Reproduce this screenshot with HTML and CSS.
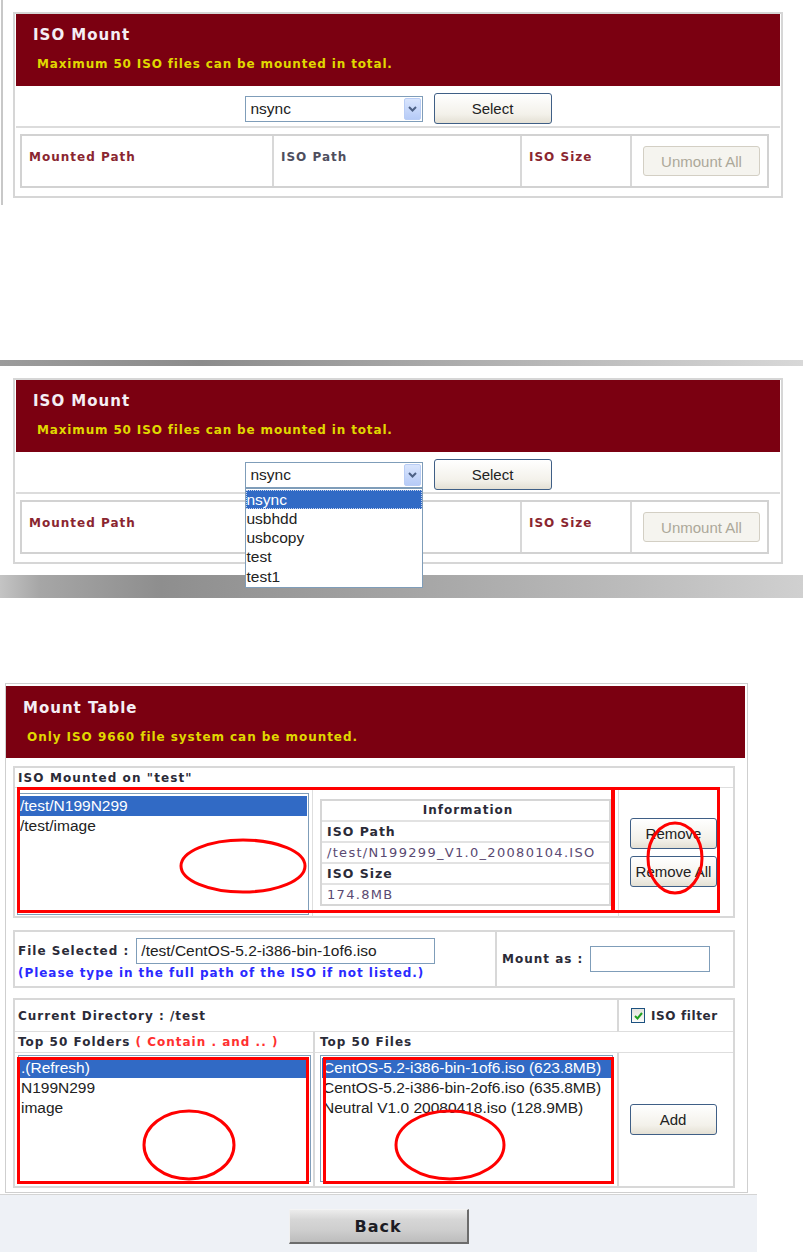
FILE: index.html
```html
<!DOCTYPE html>
<html lang="en">
<head>
    <meta charset="UTF-8">
    <meta name="viewport" content="width=device-width, initial-scale=1.0">
    <title>ISO Mount</title>
    <link rel="stylesheet" href="styles.css">
</head>
<body>
    <!-- ISO Mount, closed list -->
    <div class="shot shot-one">
        <div class="panel">
            <div class="panel-head">
                <h2>ISO Mount</h2>
                <p>Maximum 50 ISO files can be mounted in total.</p>
            </div>
            <div class="share-row">
                <div class="combo">
                    <span>nsync</span>
                    <span class="combo-arrow"><svg width="9" height="6" viewBox="0 0 9 6"><path d="M1 1 L4.5 4.5 L8 1" fill="none" stroke="#4d6185" stroke-width="2"/></svg></span>
                </div>
                <button class="btn btn-select">Select</button>
            </div>
            <div class="mount-grid">
                <div class="cell lbl-maroon">Mounted Path</div>
                <div class="cell lbl-grey">ISO Path</div>
                <div class="cell lbl-maroon">ISO Size</div>
                <div class="cell cell-btn"><button class="btn btn-off">Unmount All</button></div>
            </div>
        </div>
    </div>

    <!-- ISO Mount, list opened -->
    <div class="shot shot-two">
        <div class="frame-top"></div>
        <div class="frame-body">
            <div class="panel">
                <div class="panel-head">
                    <h2>ISO Mount</h2>
                    <p>Maximum 50 ISO files can be mounted in total.</p>
                </div>
                <div class="share-row">
                    <div class="combo">
                        <span>nsync</span>
                        <span class="combo-arrow"><svg width="9" height="6" viewBox="0 0 9 6"><path d="M1 1 L4.5 4.5 L8 1" fill="none" stroke="#4d6185" stroke-width="2"/></svg></span>
                        <ul class="drop-list">
                            <li class="picked">nsync</li>
                            <li>usbhdd</li>
                            <li>usbcopy</li>
                            <li>test</li>
                            <li>test1</li>
                        </ul>
                    </div>
                    <button class="btn btn-select">Select</button>
                </div>
                <div class="mount-grid">
                    <div class="cell lbl-maroon">Mounted Path</div>
                    <div class="cell lbl-grey"></div>
                    <div class="cell lbl-maroon">ISO Size</div>
                    <div class="cell cell-btn"><button class="btn btn-off">Unmount All</button></div>
                </div>
            </div>
        </div>
        <div class="frame-bottom"></div>
    </div>

    <!-- Mount Table -->
    <div class="shot shot-three">
        <div class="mt-box">
            <div class="panel-head mt-head">
                <h2>Mount Table</h2>
                <p>Only ISO 9660 file system can be mounted.</p>
            </div>

            <div class="section sec-mounted">
                <div class="sec-title">ISO Mounted on "test"</div>
                <div class="mounted-body">
                    <div class="list-cell">
                        <div class="listbox">
                            <div class="opt picked">/test/N199N299</div>
                            <div class="opt">/test/image</div>
                        </div>
                    </div>
                    <div class="info-cell">
                        <div class="info-table">
                            <div class="info-row info-head">Information</div>
                            <div class="info-row info-key">ISO Path</div>
                            <div class="info-row info-val">/test/N199299_V1.0_20080104.ISO</div>
                            <div class="info-row info-key">ISO Size</div>
                            <div class="info-row info-val">174.8MB</div>
                        </div>
                    </div>
                    <div class="btn-cell">
                        <button class="btn btn-side">Remove</button>
                        <button class="btn btn-side">Remove All</button>
                    </div>
                </div>
            </div>

            <div class="section sec-file">
                <div class="file-left">
                    <div class="file-line">
                        <span class="lbl-dark">File Selected :</span>
                        <span class="text-box file-box">/test/CentOS-5.2-i386-bin-1of6.iso</span>
                    </div>
                    <div class="note-blue">(Please type in the full path of the ISO if not listed.)</div>
                </div>
                <div class="file-right">
                    <span class="lbl-dark">Mount as :</span>
                    <span class="text-box mount-box"></span>
                </div>
            </div>

            <div class="section sec-browse">
                <div class="cur-dir lbl-dark">Current Directory : /test</div>
                <div class="filter-cell">
                    <span class="check"><svg width="9" height="8" viewBox="0 0 9 8"><path d="M1 4 L3.5 6.5 L8 1" fill="none" stroke="#21a121" stroke-width="2"/></svg></span>
                    <span class="lbl-dark">ISO filter</span>
                </div>
                <div class="col-title lbl-dark">Top 50 Folders <span class="note-red">( Contain . and .. )</span></div>
                <div class="col-title col-files lbl-dark">Top 50 Files</div>
                <div class="list-cell browse-left">
                    <div class="listbox tall">
                        <div class="opt picked">.(Refresh)</div>
                        <div class="opt">N199N299</div>
                        <div class="opt">image</div>
                    </div>
                </div>
                <div class="list-cell browse-mid">
                    <div class="listbox tall">
                        <div class="opt picked">CentOS-5.2-i386-bin-1of6.iso (623.8MB)</div>
                        <div class="opt">CentOS-5.2-i386-bin-2of6.iso (635.8MB)</div>
                        <div class="opt">Neutral V1.0 20080418.iso (128.9MB)</div>
                    </div>
                </div>
                <div class="btn-cell browse-right">
                    <button class="btn btn-side">Add</button>
                </div>
            </div>
        </div>

        <div class="back-bar">
            <button class="btn-back">Back</button>
        </div>

        <!-- red marks drawn over the screenshot -->
        <svg class="marks" width="803" height="569" viewBox="0 683 803 569">
            <g fill="none" stroke="#ff0000" stroke-width="3">
                <rect x="18.5" y="788.5" width="594" height="123"/>
                <rect x="613.5" y="788.5" width="105" height="123"/>
                <rect x="18.5" y="1058.5" width="289" height="124"/>
                <rect x="324.5" y="1058.5" width="288" height="124"/>
                <ellipse cx="243" cy="866" rx="62" ry="26"/>
                <ellipse cx="675" cy="858" rx="27" ry="35"/>
                <ellipse cx="189" cy="1145" rx="45" ry="34"/>
                <ellipse cx="450" cy="1145" rx="54" ry="34"/>
            </g>
        </svg>
    </div>
</body>
</html>
```

FILE: styles.css
```css
body {
    margin: 0;
    padding: 0;
    background-color: #fff;
    font-family: "DejaVu Sans", Verdana, sans-serif;
    width: 803px;
}

button {
    font-family: "Liberation Sans", Arial, sans-serif;
}

/* shared panel */
.panel {
    box-sizing: border-box;
    width: 770px;
    height: 186px;
    border: 2px solid #d6d6d6;
    padding: 0 1px;
    background-color: #fff;
}

.panel-head {
    box-sizing: border-box;
    height: 72px;
    background-color: #7b0011;
    padding: 12px 0 0 17px;
}

.panel-head h2 {
    margin: 0;
    font-size: 15px;
    line-height: 18px;
    letter-spacing: 1px;
    color: #f4eef4;
}

.panel-head p {
    margin: 12px 0 0 4px;
    font-size: 12px;
    font-weight: bold;
    line-height: 16px;
    letter-spacing: 0.85px;
    color: #e0d800;
}

.share-row {
    box-sizing: border-box;
    height: 42px;
    padding-top: 5px;
    display: flex;
    justify-content: center;
    align-items: center;
    gap: 11px;
    border-bottom: 2px solid #dcdcdc;
}

.combo {
    position: relative;
    box-sizing: border-box;
    width: 178px;
    height: 26px;
    border: 1px solid #7f9db9;
    display: flex;
    align-items: center;
    justify-content: space-between;
    padding: 0 1px 0 5px;
    font-family: "Liberation Sans", Arial, sans-serif;
    font-size: 15.5px;
    color: #222;
}

.combo-arrow {
    width: 17px;
    height: 22px;
    box-sizing: border-box;
    border: 1px solid #b9cdf5;
    border-radius: 2px;
    background: linear-gradient(#d9e5fd, #b6cbf7);
    display: flex;
    align-items: center;
    justify-content: center;
}

.drop-list {
    position: absolute;
    top: 25px;
    left: -1px;
    width: 178px;
    box-sizing: border-box;
    margin: 0;
    padding: 1px 0 1px;
    list-style: none;
    background-color: #fff;
    border: 1px solid #7f9db9;
    z-index: 5;
}

.drop-list li {
    height: 19.3px;
    line-height: 19.3px;
    padding-left: 1px;
    color: #222;
}

.drop-list li.picked {
    background-color: #316ac5;
    color: #fff;
    outline: 1px dotted #c8d4ee;
    outline-offset: -1px;
}

.btn {
    box-sizing: border-box;
    border: 1px solid #3f5f86;
    border-radius: 3px;
    background: linear-gradient(#ffffff, #f3f1ea 70%, #e4e0d4);
    color: #222;
    font-size: 15px;
    padding: 0;
    cursor: pointer;
}

.btn-select {
    width: 118px;
    height: 31px;
}

.btn-off {
    width: 117px;
    height: 30px;
    border-color: #d3cfc4;
    background: #f5f4ef;
    color: #aca899;
    cursor: default;
}

.mount-grid {
    box-sizing: border-box;
    height: 54px;
    margin: 6px 11px 0 4px;
    display: grid;
    grid-template-columns: 250px 248px 110px 1fr;
    border: 2px solid #d2d2d2;
}

.mount-grid .cell {
    padding: 14px 0 0 7px;
    font-size: 12px;
    font-weight: bold;
    letter-spacing: 1px;
    border-left: 2px solid #d8d8d8;
}

.mount-grid .cell:first-child {
    border-left: none;
}

.mount-grid .cell-btn {
    padding: 0 0 0 11px;
    display: flex;
    align-items: center;
}

.lbl-maroon {
    color: #8a2630;
}

.lbl-grey {
    color: #4e4e5e;
}

/* shot one */
.shot-one {
    height: 205px;
    box-sizing: border-box;
    margin-left: 1px;
    border-left: 2px solid #c8c8c8;
    padding: 12px 0 0 10px;
}

/* shot two */
.shot-two {
    margin-top: 155px;
}

.frame-top {
    height: 6px;
    background: linear-gradient(to right, #9c9c9c, #8c8c8c 25%, #b0b0b0 60%, #d8d8d8);
}

.frame-body {
    padding: 12px 0 11px 10px;
    margin-left: 3px;
    background-color: #fff;
}

.frame-bottom {
    height: 23px;
    background: linear-gradient(to right, #c4c4c4, #a6a6a6 5%, #8e8e8e 20%, #a4a4a4 50%, #bdbdbd 80%, #d0d0d0);
}

/* shot three */
.shot-three {
    position: relative;
    margin-top: 85px;
}

.mt-box {
    box-sizing: border-box;
    width: 743px;
    margin-left: 5px;
    border: 1px solid #cfcfcf;
    padding: 2px 2px 4px 0;
}

.mt-head {
    height: 72px;
    padding: 13px 0 0 17px;
}

.mt-head p {
    margin-left: 4px;
    letter-spacing: 0.95px;
}

.section {
    box-sizing: border-box;
    width: 722px;
    margin-left: 7px;
    border: 2px solid #d8d8d8;
    background-color: #fff;
}

.lbl-dark {
    font-size: 12px;
    font-weight: bold;
    letter-spacing: 1px;
    color: #2b2b38;
}

.sec-mounted {
    margin-top: 8px;
    height: 152px;
}

.sec-title {
    height: 19px;
    line-height: 20px;
    padding-left: 3px;
    font-size: 12px;
    font-weight: bold;
    letter-spacing: 1.1px;
    color: #2b2b38;
    border-bottom: 1px solid #dedede;
}

.mounted-body {
    display: grid;
    grid-template-columns: 297px 307px 1fr;
    height: 128px;
}

.list-cell {
    padding: 5px 3px 2px 2px;
}

.listbox {
    box-sizing: border-box;
    height: 122px;
    border: 1px solid #7f9db9;
    padding: 2px 1px;
    font-family: "Liberation Sans", Arial, sans-serif;
    font-size: 15.5px;
    color: #222;
    background-color: #fff;
}

.opt {
    height: 20px;
    line-height: 20px;
    padding-left: 1px;
    white-space: nowrap;
}

.opt.picked {
    background-color: #316ac5;
    color: #fff;
}

.info-cell {
    border-left: 1px solid #dedede;
    border-right: 1px solid #dedede;
    padding: 0 7px;
    display: flex;
    align-items: center;
}

.info-table {
    width: 100%;
    box-sizing: border-box;
    border: 2px solid #d6d6d6;
}

.info-row {
    height: 19px;
    line-height: 19px;
    padding-left: 5px;
    border-top: 2px solid #e2e2e2;
    font-size: 12px;
    letter-spacing: 1px;
    white-space: nowrap;
}

.info-row:first-child {
    border-top: none;
}

.info-head {
    text-align: center;
    font-weight: bold;
    color: #2b2b38;
}

.info-key {
    font-size: 12.5px;
    font-weight: bold;
    color: #2b2b38;
}

.info-val {
    font-size: 13px;
    letter-spacing: 1.3px;
    color: #5a4a72;
}

.btn-cell {
    display: flex;
    flex-direction: column;
    align-items: center;
    justify-content: center;
    gap: 7px;
    padding-right: 5px;
}

.btn-side {
    width: 87px;
    height: 31px;
}

.sec-file {
    margin-top: 12px;
    height: 58px;
    display: grid;
    grid-template-columns: 480px 1fr;
}

.file-left {
    padding: 6px 0 0 3px;
}

.file-line {
    display: flex;
    align-items: center;
    gap: 7px;
}

.text-box {
    box-sizing: border-box;
    height: 26px;
    border: 1px solid #7f9db9;
    font-family: "Liberation Sans", Arial, sans-serif;
    font-size: 15.5px;
    line-height: 24px;
    padding-left: 4px;
    color: #222;
    white-space: nowrap;
}

.file-box {
    width: 299px;
}

.note-blue {
    margin-top: 2px;
    font-size: 12px;
    font-weight: bold;
    letter-spacing: 0.95px;
    color: #2a2aff;
}

.file-right {
    border-left: 2px solid #d8d8d8;
    display: flex;
    align-items: center;
    gap: 7px;
    padding-left: 5px;
}

.mount-box {
    width: 120px;
}

.sec-browse {
    margin-top: 10px;
    height: 190px;
    display: grid;
    grid-template-columns: 298px 304px 1fr;
    grid-template-rows: 32px 21px 1fr;
}

.cur-dir {
    grid-column: 1 / 3;
    padding-left: 3px;
    line-height: 32px;
    border-bottom: 1px solid #dedede;
}

.filter-cell {
    display: flex;
    align-items: center;
    gap: 6px;
    padding-left: 12px;
    border-left: 2px solid #d8d8d8;
    border-bottom: 1px solid #dedede;
}

.filter-cell .lbl-dark {
    letter-spacing: 0.6px;
}

.check {
    box-sizing: border-box;
    width: 14px;
    height: 15px;
    border: 1px solid #1c5180;
    background: linear-gradient(#e4e4de, #fbfbf9);
    display: flex;
    align-items: center;
    justify-content: center;
}

.col-title {
    line-height: 20px;
    padding-left: 3px;
    border-bottom: 1px solid #dedede;
}

.col-files {
    grid-column: 2 / 4;
    padding-left: 5px;
    border-left: 2px solid #d8d8d8;
}

.note-red {
    color: #ff3030;
}

.listbox.tall {
    height: 127px;
}

.browse-left {
    padding: 2px 2px 2px 3px;
}

.browse-mid {
    padding: 2px 4px 2px 5px;
    border-left: 2px solid #d8d8d8;
}

.browse-right {
    border-left: 2px solid #d8d8d8;
    padding-right: 6px;
}

.back-bar {
    box-sizing: border-box;
    width: 757px;
    height: 60px;
    margin-top: 1px;
    border-top: 1px solid #d4d4d4;
    background-color: #eef1f6;
    display: flex;
    justify-content: center;
    padding-top: 14px;
}

.btn-back {
    width: 180px;
    height: 35px;
    border: none;
    border-top: 1px solid #f4f4f4;
    border-left: 1px solid #f0f0f0;
    border-right: 2px solid #6c6c6c;
    border-bottom: 2px solid #6c6c6c;
    background: linear-gradient(#ececec, #d6d6d6 30%, #cfcfcf 60%, #bdbdbd);
    font-family: "DejaVu Sans", Verdana, sans-serif;
    font-size: 16px;
    font-weight: bold;
    letter-spacing: 1px;
    color: #1c1c24;
    padding: 0;
}

.marks {
    position: absolute;
    top: 0;
    left: 0;
    pointer-events: none;
}
```
